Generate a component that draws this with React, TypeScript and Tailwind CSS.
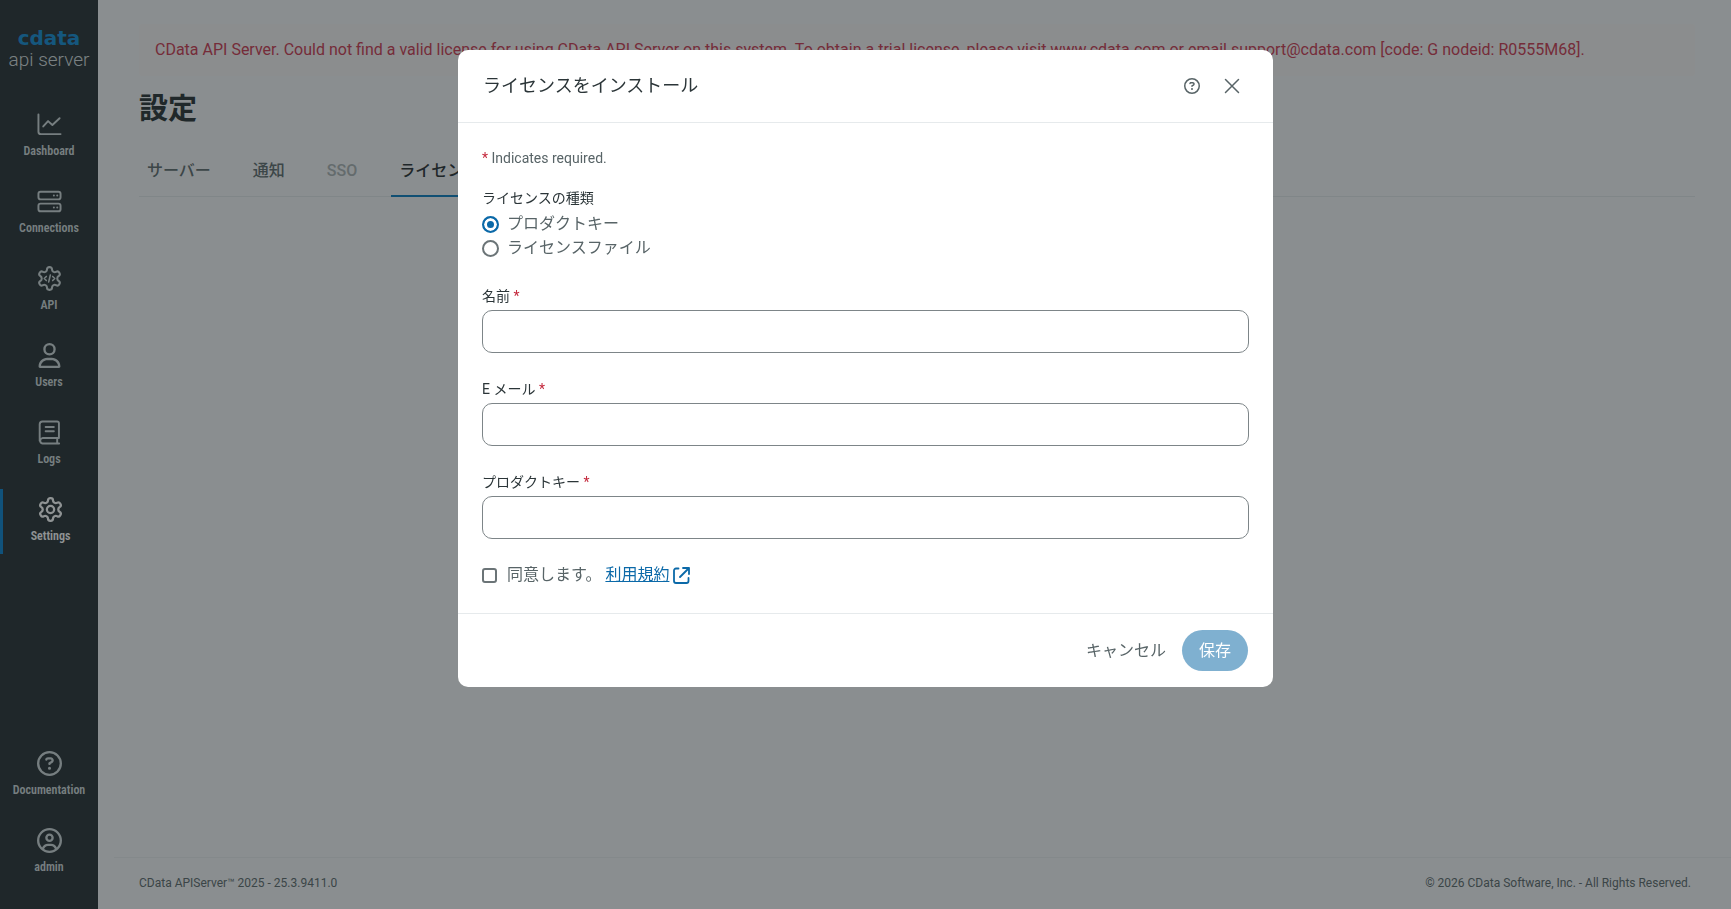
import React, { useState } from 'react';
import { FaRegCircleQuestion, FaRegCircleUser, FaRegUser } from 'react-icons/fa6';

type IconProps = { className?: string };

const stroke = {
  fill: 'none',
  stroke: 'currentColor',
  strokeWidth: 2,
  strokeLinecap: 'round' as const,
  strokeLinejoin: 'round' as const,
};

const GEAR =
  'M12.22 2h-.44a2 2 0 0 0-2 2v.18a2 2 0 0 1-1 1.73l-.43.25a2 2 0 0 1-2 0l-.15-.08a2 2 0 0 0-2.73.73l-.22.38a2 2 0 0 0 .73 2.73l.15.1a2 2 0 0 1 1 1.72v.51a2 2 0 0 1-1 1.74l-.15.09a2 2 0 0 0-.73 2.73l.22.38a2 2 0 0 0 2.73.73l.15-.08a2 2 0 0 1 2 0l.43.25a2 2 0 0 1 1 1.73V20a2 2 0 0 0 2 2h.44a2 2 0 0 0 2-2v-.18a2 2 0 0 1 1-1.73l.43-.25a2 2 0 0 1 2 0l.15.08a2 2 0 0 0 2.73-.73l.22-.39a2 2 0 0 0-.73-2.73l-.15-.08a2 2 0 0 1-1-1.74v-.5a2 2 0 0 1 1-1.74l.15-.09a2 2 0 0 0 .73-2.73l-.22-.38a2 2 0 0 0-2.73-.73l-.15.08a2 2 0 0 1-2 0l-.43-.25a2 2 0 0 1-1-1.73V4a2 2 0 0 0-2-2z';

const ChartIcon = ({ className }: IconProps) => (
  <svg viewBox="0 0 26 24" className={className} {...stroke}>
    <path d="M1.5 1.5v18a2.5 2.5 0 0 0 2.5 2.5h20.5M6.500 14l5-5.500 4.500 4 7.500-7" />
  </svg>
);

const ServerIcon = ({ className }: IconProps) => (
  <svg viewBox="0 0 26 24" className={className} {...stroke}>
    <rect x="1.500" y="1.800" width="23" height="8" rx="2.200" />
    <rect x="1.500" y="14.200" width="23" height="8" rx="2.200" />
    <path d="M17.500 5.800h.1M21 5.800h.1M17.500 18.200h.1M21 18.200h.1" />
  </svg>
);

const ApiIcon = ({ className }: IconProps) => (
  <svg viewBox="1 1 22 22" className={className} {...stroke} strokeWidth={1.8}>
    <path d={GEAR} />
    <path strokeWidth="1.400" d="M9.200 10.200 7.400 12l1.800 1.800M14.800 10.200l1.800 1.800-1.800 1.800M12.700 9l-1.400 6" />
  </svg>
);

const LogsIcon = ({ className }: IconProps) => (
  <svg viewBox="0 0 24 26" className={className} {...stroke}>
    <path d="M21.800 18.800H4.700a2.900 2.900 0 0 0 0 5.700h17.300M20 19v5.300M1.800 21.500V4.500a3 3 0 0 1 3-3h15.200a1.800 1.800 0 0 1 1.800 1.800v15.400M8 7.200h8.500M8 11.700h8.500" />
  </svg>
);

const GearIcon = ({ className }: IconProps) => (
  <svg viewBox="1 1 22 22" className={className} {...stroke}>
    <path d={GEAR} />
    <circle cx="12" cy="12" r="3.200" />
  </svg>
);

const CloseIcon = ({ className }: IconProps) => (
  <svg viewBox="0 0 16 16" className={className} {...stroke} strokeWidth={1.5}>
    <path d="m1.500 1.500 13 13M14.500 1.500l-13 13" />
  </svg>
);

const ExternalIcon = ({ className }: IconProps) => (
  <svg viewBox="0 0 17 17" className={className} {...stroke} strokeWidth={1.8}>
    <path d="M5.500 1.500H3a2 2 0 0 0-2 2V14a2 2 0 0 0 2 2h10.500a2 2 0 0 0 2-2v-3M10 1h6v6M16 1 7 10" />
  </svg>
);

interface NavEntry {
  label: string;
  icon: React.ComponentType<IconProps>;
  active?: boolean;
}

const mainNav: NavEntry[] = [
  { label: 'Dashboard', icon: ChartIcon },
  { label: 'Connections', icon: ServerIcon },
  { label: 'API', icon: ApiIcon },
  { label: 'Users', icon: FaRegUser },
  { label: 'Logs', icon: LogsIcon },
  { label: 'Settings', icon: GearIcon, active: true },
];

const bottomNav: NavEntry[] = [
  { label: 'Documentation', icon: FaRegCircleQuestion },
  { label: 'admin', icon: FaRegCircleUser },
];

const NavLink = ({ label, icon: Icon, active }: NavEntry) => (
  <a
    href="#"
    className={
      active
        ? 'flex h-[65px] flex-col items-center justify-center gap-1 border-l-3 border-[#007dcc] text-white'
        : 'flex h-[65px] flex-col items-center justify-center gap-1 text-[#cdd5d7]'
    }
  >
    <Icon className="size-[25px]" />
    <span className="text-[12px] leading-5 font-semibold font-['Roboto_Condensed','Roboto',sans-serif]">{label}</span>
  </a>
);

const Sidebar = () => (
  <aside className="flex w-[98px] shrink-0 flex-col bg-[#1f272a] pt-7 pb-6">
    <div className="mb-8 flex flex-col items-center">
      <span className="font-['DejaVu_Sans',sans-serif] text-[20px] leading-5 font-bold text-[#0a86d2]">cdata</span>
      <span className="text-[19px] leading-6 font-light text-[#d5dbdd]">api server</span>
    </div>
    <nav className="flex flex-1 flex-col gap-3">
      {mainNav.map(item => (
        <NavLink key={item.label} {...item} />
      ))}
      <div className="mt-auto flex flex-col gap-3">
        {bottomNav.map(item => (
          <NavLink key={item.label} {...item} />
        ))}
      </div>
    </nav>
  </aside>
);

const tabs = [
  { label: 'サーバー', className: 'border-transparent text-[#586467]' },
  { label: '通知', className: 'border-transparent text-[#586467]' },
  { label: 'SSO', className: 'border-transparent text-[#a9afb1]' },
  { label: 'ライセンス', className: 'border-[#0077bd] text-[#1f272a]' },
];

const SettingsPage = () => (
  <div className="flex min-w-0 flex-1 flex-col bg-[#f5f5f6]">
    <main className="flex-1 pt-6 pr-9 pl-[41px]">
      <p className="rounded bg-[#f7f2f3] px-4 py-[14px] text-base text-[#cb3048]">
        CData API Server. Could not find a valid license for using CData API Server on this system. To obtain a trial
        license, please visit www.cdata.com or email support@cdata.com [code: G nodeid: R0555M68].
      </p>
      <h1 className="mt-[13px] text-[29px] leading-10 font-bold text-[#20282b]">設定</h1>
      <div role="tablist" className="mt-[18px] flex gap-[26px] border-b border-[#e1e4e6]">
        {tabs.map(tab => (
          <button
            key={tab.label}
            role="tab"
            className={`-mb-px border-b-2 px-2 pt-3 pb-3 text-base leading-6 font-medium ${tab.className}`}
          >
            {tab.label}
          </button>
        ))}
      </div>
    </main>
    <footer className="ml-4 flex justify-between border-t border-[#e9ebec] py-4 pr-10 pl-[25px] text-[12px] leading-[19px] text-[#566265]">
      <span>CData APIServer™ 2025 - 25.3.9411.0</span>
      <span>© 2026 CData Software, Inc. - All Rights Reserved.</span>
    </footer>
  </div>
);

const Required = () => <span className="text-[#c4283c]">*</span>;

const fields = [
  { id: 'name', label: '名前', type: 'text' },
  { id: 'email', label: 'E メール', type: 'email' },
  { id: 'productKey', label: 'プロダクトキー', type: 'text' },
];

const LicenseDialog = () => {
  const [licenseType, setLicenseType] = useState('key');
  const [agreed, setAgreed] = useState(false);

  return (
    <div className="fixed inset-0 flex items-start justify-center bg-[#1f272a]/50 pt-[50px]">
      <form
        role="dialog"
        aria-labelledby="dialog-title"
        className="w-full max-w-[815px] rounded-[10px] bg-white text-[#586467]"
        onSubmit={e => e.preventDefault()}
      >
        <header className="flex items-center justify-between border-b border-[#e6eaec] px-[25px] py-5">
          <h2 id="dialog-title" className="text-[18px] leading-8 text-[#2b3538]">
            ライセンスをインストール
          </h2>
          <div className="flex gap-2">
            <button type="button" aria-label="Help" className="flex size-8 items-center justify-center">
              <FaRegCircleQuestion className="size-4" />
            </button>
            <button type="button" aria-label="Close" className="flex size-8 items-center justify-center">
              <CloseIcon className="size-4" />
            </button>
          </div>
        </header>

        <div className="px-6 pt-[25px] pb-[26px]">
          <p className="text-sm">
            <Required /> Indicates required.
          </p>

          <fieldset className="mt-5">
            <legend className="mb-1 text-sm text-[#2b3538]">ライセンスの種類</legend>
            {[
              { value: 'key', label: 'プロダクトキー' },
              { value: 'file', label: 'ライセンスファイル' },
            ].map(option => (
              <label key={option.value} className="flex items-center gap-2 text-base leading-6">
                <input
                  type="radio"
                  name="licenseType"
                  value={option.value}
                  checked={licenseType === option.value}
                  onChange={() => setLicenseType(option.value)}
                  className="size-[17px] appearance-none rounded-full border-2 border-[#6b7477] bg-white checked:border-[#0b69a8] checked:bg-[#0b69a8] checked:shadow-[inset_0_0_0_3px_#fff]"
                />
                {option.label}
              </label>
            ))}
          </fieldset>

          {fields.map(field => (
            <div key={field.id} className="mt-[26px]">
              <label htmlFor={field.id} className="block text-sm text-[#2b3538]">
                {field.label} <Required />
              </label>
              <input
                id={field.id}
                type={field.type}
                className="mt-1 block h-[43px] w-full rounded-[10px] border border-[#7d8588] px-3 text-base outline-none"
              />
            </div>
          ))}

          <div className="mt-6 flex items-center gap-1 text-base leading-6">
            <label className="flex items-center gap-[10px]">
              <input
                type="checkbox"
                checked={agreed}
                onChange={e => setAgreed(e.target.checked)}
                className="size-[15px] appearance-none rounded-[3px] border-2 border-[#6b7477] bg-white checked:bg-[#0b69a8]"
              />
              同意します。
            </label>
            <a href="#" className="flex items-center gap-1 text-[#0b69a8] underline">
              利用規約
              <ExternalIcon className="size-[17px]" />
            </a>
          </div>
        </div>

        <footer className="flex items-center justify-end gap-4 border-t border-[#e6eaec] px-[25px] py-4">
          <button type="button" className="text-base">
            キャンセル
          </button>
          <button
            type="submit"
            disabled={!agreed}
            className="h-[41px] rounded-full bg-[#7fb0d0] px-[17px] text-base text-white"
          >
            保存
          </button>
        </footer>
      </form>
    </div>
  );
};

const App: React.FC = () => (
  <div className="flex min-h-screen font-['Roboto','Noto_Sans_CJK_JP',sans-serif]">
    <Sidebar />
    <SettingsPage />
    <LicenseDialog />
  </div>
);

export default App;
